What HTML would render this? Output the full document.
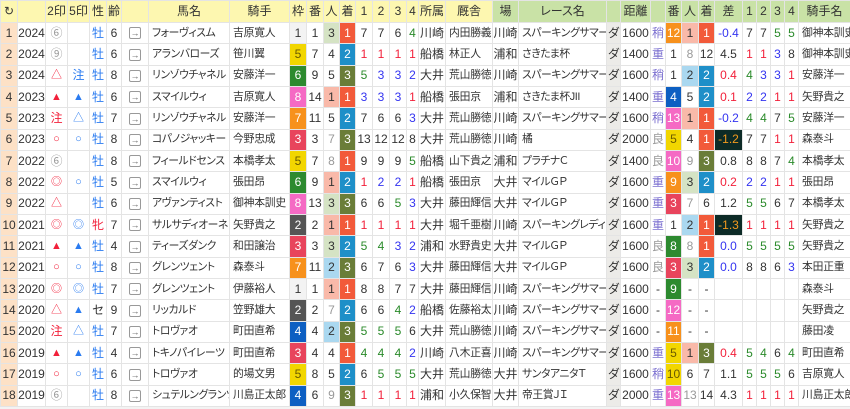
<!DOCTYPE html>
<html><head><meta charset="utf-8"><style>
*{margin:0;padding:0;box-sizing:border-box}
body{width:850px;height:409px;background:#f3f3f3;font-family:"Liberation Sans","Noto Sans CJK JP",sans-serif;font-size:12px;color:#333;overflow:hidden;font-feature-settings:"palt"}
table{border-collapse:collapse;table-layout:fixed;width:850px;background:#fff}
td{border:1px solid #e4e4e4;text-align:center;height:21.33px;white-space:nowrap;overflow:hidden;line-height:19px;padding:0}
tr.h td{height:22px;background:#fdf7b0;font-size:12px}
tr.h td.g{background:#c9e2a6}
td.n{background:#fde1c6}
td.l{text-align:left;padding-left:3px;font-size:10.8px;letter-spacing:-0.2px}
td.k{letter-spacing:-0.4px}
td.da{background:#ecebe8}
.w1{background:#f3f3f3}.w2{background:#555;color:#fff}.w3{background:#e8445c;color:#fff}.w4{background:#0d5fc2;color:#fff}.w5{background:#f2d600;color:#6a5a00}.w6{background:#2d8a2f;color:#fff}.w7{background:#f7911c;color:#fff}.w8{background:#f56ac4;color:#fff}
.p1{background:#f9b9a9}.p2{background:#aad8f0}.p3{background:#d5e3c4}
.f1{background:#f25a3a;color:#fff}.f2{background:#1e8fc8;color:#fff}.f3{background:#6a7d38;color:#fff}
.dk{background:#0d2b27;color:#f39a1e}
.r{color:#f2203a}.b{color:#3434f0}.gr{color:#2a8a2a}.gy{color:#999}.bl{color:#2a7bf0}.s{color:#7b6fd0}
.ar{display:inline-block;width:12px;height:12px;border:1px solid #999;border-radius:2px;font-size:9px;line-height:10px;color:#666;vertical-align:middle}
.mk{font-size:11px}
</style></head><body>
<table>
<colgroup>
<col style="width:17px"><col style="width:28px"><col style="width:22px"><col style="width:22px"><col style="width:17px"><col style="width:15px"><col style="width:27px"><col style="width:81px"><col style="width:60px"><col style="width:17px"><col style="width:17px"><col style="width:16px"><col style="width:16px"><col style="width:17px"><col style="width:17px"><col style="width:17px"><col style="width:12px"><col style="width:27px"><col style="width:47px"><col style="width:26px"><col style="width:88px"><col style="width:14px"><col style="width:30px"><col style="width:15px"><col style="width:16px"><col style="width:17px"><col style="width:16px"><col style="width:28px"><col style="width:14px"><col style="width:14px"><col style="width:14px"><col style="width:14px"><col style="width:52px">
</colgroup>
<tr class="h"><td>↻</td><td></td><td>2印</td><td>5印</td><td>性</td><td>齢</td><td></td><td>馬名</td><td>騎手</td><td>枠</td><td>番</td><td>人</td><td>着</td><td>1</td><td>2</td><td>3</td><td>4</td><td>所属</td><td>厩舎</td><td class="g">場</td><td class="g">レース名</td><td class="g"></td><td class="g">距離</td><td class="g"></td><td class="g">番</td><td class="g">人</td><td class="g">着</td><td class="g">差</td><td class="g">1</td><td class="g">2</td><td class="g">3</td><td class="g">4</td><td class="g">騎手名</td></tr>
<tr><td class="n">1</td><td>2024</td><td class="gy">⑥</td><td></td><td class="bl">牡</td><td>6</td><td><span class="ar">→</span></td><td class="l k">フォーヴィスム</td><td class="l">吉原寛人</td><td class="w1">1</td><td>1</td><td class="p3">3</td><td class="f1">1</td><td>7</td><td>7</td><td>6</td><td class="gr">4</td><td>川崎</td><td class="l">内田勝義</td><td>川崎</td><td class="l k">スパーキングサマーチ</td><td class="da">ダ</td><td>1600</td><td class="s">稍</td><td class="w7">12</td><td class="p1">1</td><td class="f1">1</td><td class="b">-0.4</td><td>7</td><td>7</td><td class="gr">5</td><td class="gr">5</td><td class="l">御神本訓史</td></tr>
<tr><td class="n">2</td><td>2024</td><td class="gy">⑨</td><td></td><td class="bl">牡</td><td>6</td><td><span class="ar">→</span></td><td class="l k">アランバローズ</td><td class="l">笹川翼</td><td class="w5">5</td><td>7</td><td>4</td><td class="f2">2</td><td class="r">1</td><td class="r">1</td><td class="r">1</td><td class="r">1</td><td>船橋</td><td class="l">林正人</td><td>浦和</td><td class="l k">さきたま杯</td><td class="da">ダ</td><td>1400</td><td class="s">重</td><td>1</td><td class="gy">8</td><td>12</td><td>4.5</td><td class="r">1</td><td class="r">1</td><td class="b">3</td><td>8</td><td class="l">御神本訓史</td></tr>
<tr><td class="n">3</td><td>2024</td><td class="r mk">△</td><td class="bl">注</td><td class="bl">牡</td><td>8</td><td><span class="ar">→</span></td><td class="l k">リンゾウチャネル</td><td class="l">安藤洋一</td><td class="w6">6</td><td>9</td><td>5</td><td class="f3">3</td><td class="gr">5</td><td class="b">3</td><td class="b">3</td><td class="b">2</td><td>大井</td><td class="l">荒山勝徳</td><td>川崎</td><td class="l k">スパーキングサマーチ</td><td class="da">ダ</td><td>1600</td><td class="s">稍</td><td>1</td><td class="p2">2</td><td class="f2">2</td><td class="r">0.4</td><td class="gr">4</td><td class="b">3</td><td class="b">3</td><td class="r">1</td><td class="l">安藤洋一</td></tr>
<tr><td class="n">4</td><td>2023</td><td class="r mk">▲</td><td class="bl mk">▲</td><td class="bl">牡</td><td>6</td><td><span class="ar">→</span></td><td class="l k">スマイルウィ</td><td class="l">吉原寛人</td><td class="w8">8</td><td>14</td><td class="p1">1</td><td class="f1">1</td><td class="b">3</td><td class="b">3</td><td class="b">3</td><td class="r">1</td><td>船橋</td><td class="l">張田京</td><td>浦和</td><td class="l k">さきたま杯JII</td><td class="da">ダ</td><td>1400</td><td class="s">重</td><td class="w4">4</td><td>5</td><td class="f2">2</td><td class="r">0.1</td><td class="b">2</td><td class="b">2</td><td class="r">1</td><td class="r">1</td><td class="l">矢野貴之</td></tr>
<tr><td class="n">5</td><td>2023</td><td class="r">注</td><td class="bl mk">△</td><td class="bl">牡</td><td>7</td><td><span class="ar">→</span></td><td class="l k">リンゾウチャネル</td><td class="l">安藤洋一</td><td class="w7">7</td><td>11</td><td>5</td><td class="f2">2</td><td>7</td><td>6</td><td>6</td><td class="b">3</td><td>大井</td><td class="l">荒山勝徳</td><td>川崎</td><td class="l k">スパーキングサマーチ</td><td class="da">ダ</td><td>1600</td><td class="s">稍</td><td class="w8">13</td><td class="p1">1</td><td class="f1">1</td><td class="b">-0.2</td><td class="gr">4</td><td class="gr">4</td><td>7</td><td class="gr">5</td><td class="l">安藤洋一</td></tr>
<tr><td class="n">6</td><td>2023</td><td class="r mk">○</td><td class="bl mk">○</td><td class="bl">牡</td><td>8</td><td><span class="ar">→</span></td><td class="l k">コパノジャッキー</td><td class="l">今野忠成</td><td class="w3">3</td><td>3</td><td class="gy">7</td><td class="f3">3</td><td>13</td><td>12</td><td>12</td><td>8</td><td>大井</td><td class="l">荒山勝徳</td><td>川崎</td><td class="l k">橘</td><td class="da">ダ</td><td>2000</td><td class="gy">良</td><td class="w5">5</td><td>4</td><td class="f1">1</td><td class="dk">-1.2</td><td>7</td><td>7</td><td class="r">1</td><td class="r">1</td><td class="l">森泰斗</td></tr>
<tr><td class="n">7</td><td>2022</td><td class="gy">⑥</td><td></td><td class="bl">牡</td><td>8</td><td><span class="ar">→</span></td><td class="l k">フィールドセンス</td><td class="l">本橋孝太</td><td class="w5">5</td><td>7</td><td class="gy">8</td><td class="f1">1</td><td>9</td><td>9</td><td>9</td><td class="gr">5</td><td>船橋</td><td class="l">山下貴之</td><td>浦和</td><td class="l k">プラチナＣ</td><td class="da">ダ</td><td>1400</td><td class="gy">良</td><td class="w8">10</td><td class="gy">9</td><td class="f3">3</td><td>0.8</td><td>8</td><td>8</td><td>7</td><td class="gr">4</td><td class="l">本橋孝太</td></tr>
<tr><td class="n">8</td><td>2022</td><td class="r mk">◎</td><td class="bl mk">○</td><td class="bl">牡</td><td>5</td><td><span class="ar">→</span></td><td class="l k">スマイルウィ</td><td class="l">張田昂</td><td class="w6">6</td><td>9</td><td class="p1">1</td><td class="f2">2</td><td class="r">1</td><td class="b">2</td><td class="b">2</td><td class="r">1</td><td>船橋</td><td class="l">張田京</td><td>大井</td><td class="l k">マイルＧＰ</td><td class="da">ダ</td><td>1600</td><td class="s">重</td><td class="w7">9</td><td class="p3">3</td><td class="f2">2</td><td class="r">0.2</td><td class="b">2</td><td class="b">2</td><td class="r">1</td><td class="r">1</td><td class="l">張田昂</td></tr>
<tr><td class="n">9</td><td>2022</td><td class="r mk">△</td><td></td><td class="bl">牡</td><td>6</td><td><span class="ar">→</span></td><td class="l k">アヴァンティスト</td><td class="l">御神本訓史</td><td class="w8">8</td><td>13</td><td class="p3">3</td><td class="f3">3</td><td>6</td><td>6</td><td class="gr">5</td><td class="b">3</td><td>大井</td><td class="l">藤田輝信</td><td>大井</td><td class="l k">マイルＧＰ</td><td class="da">ダ</td><td>1600</td><td class="s">重</td><td class="w3">3</td><td class="gy">7</td><td>6</td><td>1.2</td><td class="gr">5</td><td class="gr">5</td><td>6</td><td>7</td><td class="l">本橋孝太</td></tr>
<tr><td class="n">10</td><td>2021</td><td class="r mk">◎</td><td class="bl mk">◎</td><td class="r">牝</td><td>7</td><td><span class="ar">→</span></td><td class="l k">サルサディオーネ</td><td class="l">矢野貴之</td><td class="w2">2</td><td>2</td><td class="p1">1</td><td class="f1">1</td><td class="r">1</td><td class="r">1</td><td class="r">1</td><td class="r">1</td><td>大井</td><td class="l">堀千亜樹</td><td>川崎</td><td class="l k">スパーキングレディ</td><td class="da">ダ</td><td>1600</td><td class="s">重</td><td>1</td><td class="p2">2</td><td class="f1">1</td><td class="dk">-1.3</td><td class="r">1</td><td class="r">1</td><td class="r">1</td><td class="r">1</td><td class="l">矢野貴之</td></tr>
<tr><td class="n">11</td><td>2021</td><td class="r mk">▲</td><td class="bl mk">▲</td><td class="bl">牡</td><td>4</td><td><span class="ar">→</span></td><td class="l k">ティーズダンク</td><td class="l">和田譲治</td><td class="w3">3</td><td>3</td><td class="p3">3</td><td class="f2">2</td><td class="gr">5</td><td class="gr">4</td><td class="b">3</td><td class="b">2</td><td>浦和</td><td class="l">水野貴史</td><td>大井</td><td class="l k">マイルＧＰ</td><td class="da">ダ</td><td>1600</td><td class="gy">良</td><td class="w6">8</td><td class="gy">8</td><td class="f1">1</td><td class="b">0.0</td><td class="gr">5</td><td class="gr">5</td><td class="gr">5</td><td class="gr">5</td><td class="l">矢野貴之</td></tr>
<tr><td class="n">12</td><td>2021</td><td class="r mk">○</td><td class="bl mk">○</td><td class="bl">牡</td><td>8</td><td><span class="ar">→</span></td><td class="l k">グレンツェント</td><td class="l">森泰斗</td><td class="w7">7</td><td>11</td><td class="p2">2</td><td class="f3">3</td><td>6</td><td>7</td><td>6</td><td class="b">3</td><td>大井</td><td class="l">藤田輝信</td><td>大井</td><td class="l k">マイルＧＰ</td><td class="da">ダ</td><td>1600</td><td class="gy">良</td><td class="w3">3</td><td class="p3">3</td><td class="f2">2</td><td class="b">0.0</td><td>8</td><td>8</td><td>6</td><td class="b">3</td><td class="l">本田正重</td></tr>
<tr><td class="n">13</td><td>2020</td><td class="r mk">◎</td><td class="bl mk">◎</td><td class="bl">牡</td><td>7</td><td><span class="ar">→</span></td><td class="l k">グレンツェント</td><td class="l">伊藤裕人</td><td class="w1">1</td><td>1</td><td class="p1">1</td><td class="f1">1</td><td>8</td><td>8</td><td>7</td><td>7</td><td>大井</td><td class="l">藤田輝信</td><td>川崎</td><td class="l k">スパーキングサマー</td><td class="da">ダ</td><td>1600</td><td>-</td><td class="w6">9</td><td>-</td><td>-</td><td></td><td></td><td></td><td></td><td></td><td class="l">森泰斗</td></tr>
<tr><td class="n">14</td><td>2020</td><td class="r mk">△</td><td class="bl mk">▲</td><td>セ</td><td>9</td><td><span class="ar">→</span></td><td class="l k">リッカルド</td><td class="l">笠野雄大</td><td class="w2">2</td><td>2</td><td class="gy">7</td><td class="f2">2</td><td>6</td><td>6</td><td class="gr">4</td><td class="b">2</td><td>船橋</td><td class="l">佐藤裕太</td><td>川崎</td><td class="l k">スパーキングサマー</td><td class="da">ダ</td><td>1600</td><td>-</td><td class="w8">12</td><td>-</td><td>-</td><td></td><td></td><td></td><td></td><td></td><td class="l">矢野貴之</td></tr>
<tr><td class="n">15</td><td>2020</td><td class="r">注</td><td class="bl mk">△</td><td class="bl">牡</td><td>7</td><td><span class="ar">→</span></td><td class="l k">トロヴァオ</td><td class="l">町田直希</td><td class="w4">4</td><td>4</td><td class="p2">2</td><td class="f3">3</td><td class="gr">5</td><td class="gr">5</td><td class="gr">5</td><td>6</td><td>大井</td><td class="l">荒山勝徳</td><td>川崎</td><td class="l k">スパーキングサマー</td><td class="da">ダ</td><td>1600</td><td>-</td><td class="w7">11</td><td>-</td><td>-</td><td></td><td></td><td></td><td></td><td></td><td class="l">藤田凌</td></tr>
<tr><td class="n">16</td><td>2019</td><td class="r mk">▲</td><td class="bl mk">▲</td><td class="bl">牡</td><td>4</td><td><span class="ar">→</span></td><td class="l k">トキノパイレーツ</td><td class="l">町田直希</td><td class="w3">3</td><td>4</td><td>4</td><td class="f1">1</td><td class="gr">4</td><td class="gr">4</td><td class="gr">4</td><td class="b">2</td><td>川崎</td><td class="l">八木正喜</td><td>川崎</td><td class="l k">スパーキングサマーチ</td><td class="da">ダ</td><td>1600</td><td class="s">重</td><td class="w5">5</td><td class="p1">1</td><td class="f3">3</td><td class="r">0.4</td><td class="gr">5</td><td class="gr">4</td><td>6</td><td class="gr">4</td><td class="l">町田直希</td></tr>
<tr><td class="n">17</td><td>2019</td><td class="r mk">○</td><td class="bl mk">○</td><td class="bl">牡</td><td>6</td><td><span class="ar">→</span></td><td class="l k">トロヴァオ</td><td class="l">的場文男</td><td class="w5">5</td><td>8</td><td>5</td><td class="f2">2</td><td>6</td><td class="gr">5</td><td class="gr">5</td><td class="gr">5</td><td>大井</td><td class="l">荒山勝徳</td><td>大井</td><td class="l k">サンタアニタＴ</td><td class="da">ダ</td><td>1600</td><td class="s">稍</td><td class="w5">10</td><td>6</td><td>7</td><td>1.1</td><td class="gr">5</td><td class="gr">5</td><td class="gr">5</td><td>6</td><td class="l">吉原寛人</td></tr>
<tr><td class="n">18</td><td>2019</td><td class="gy">⑥</td><td></td><td class="bl">牡</td><td>8</td><td><span class="ar">→</span></td><td class="l k">シュテルングランツ</td><td class="l">川島正太郎</td><td class="w4">4</td><td>6</td><td class="gy">9</td><td class="f3">3</td><td class="r">1</td><td class="r">1</td><td class="r">1</td><td class="r">1</td><td>浦和</td><td class="l">小久保智</td><td>大井</td><td class="l k">帝王賞ＪＩ</td><td class="da">ダ</td><td>2000</td><td class="s">重</td><td class="w8">13</td><td class="gy">13</td><td>14</td><td>4.3</td><td class="r">1</td><td class="r">1</td><td class="r">1</td><td class="r">1</td><td class="l">川島正太郎</td></tr>
</table>
</body></html>
